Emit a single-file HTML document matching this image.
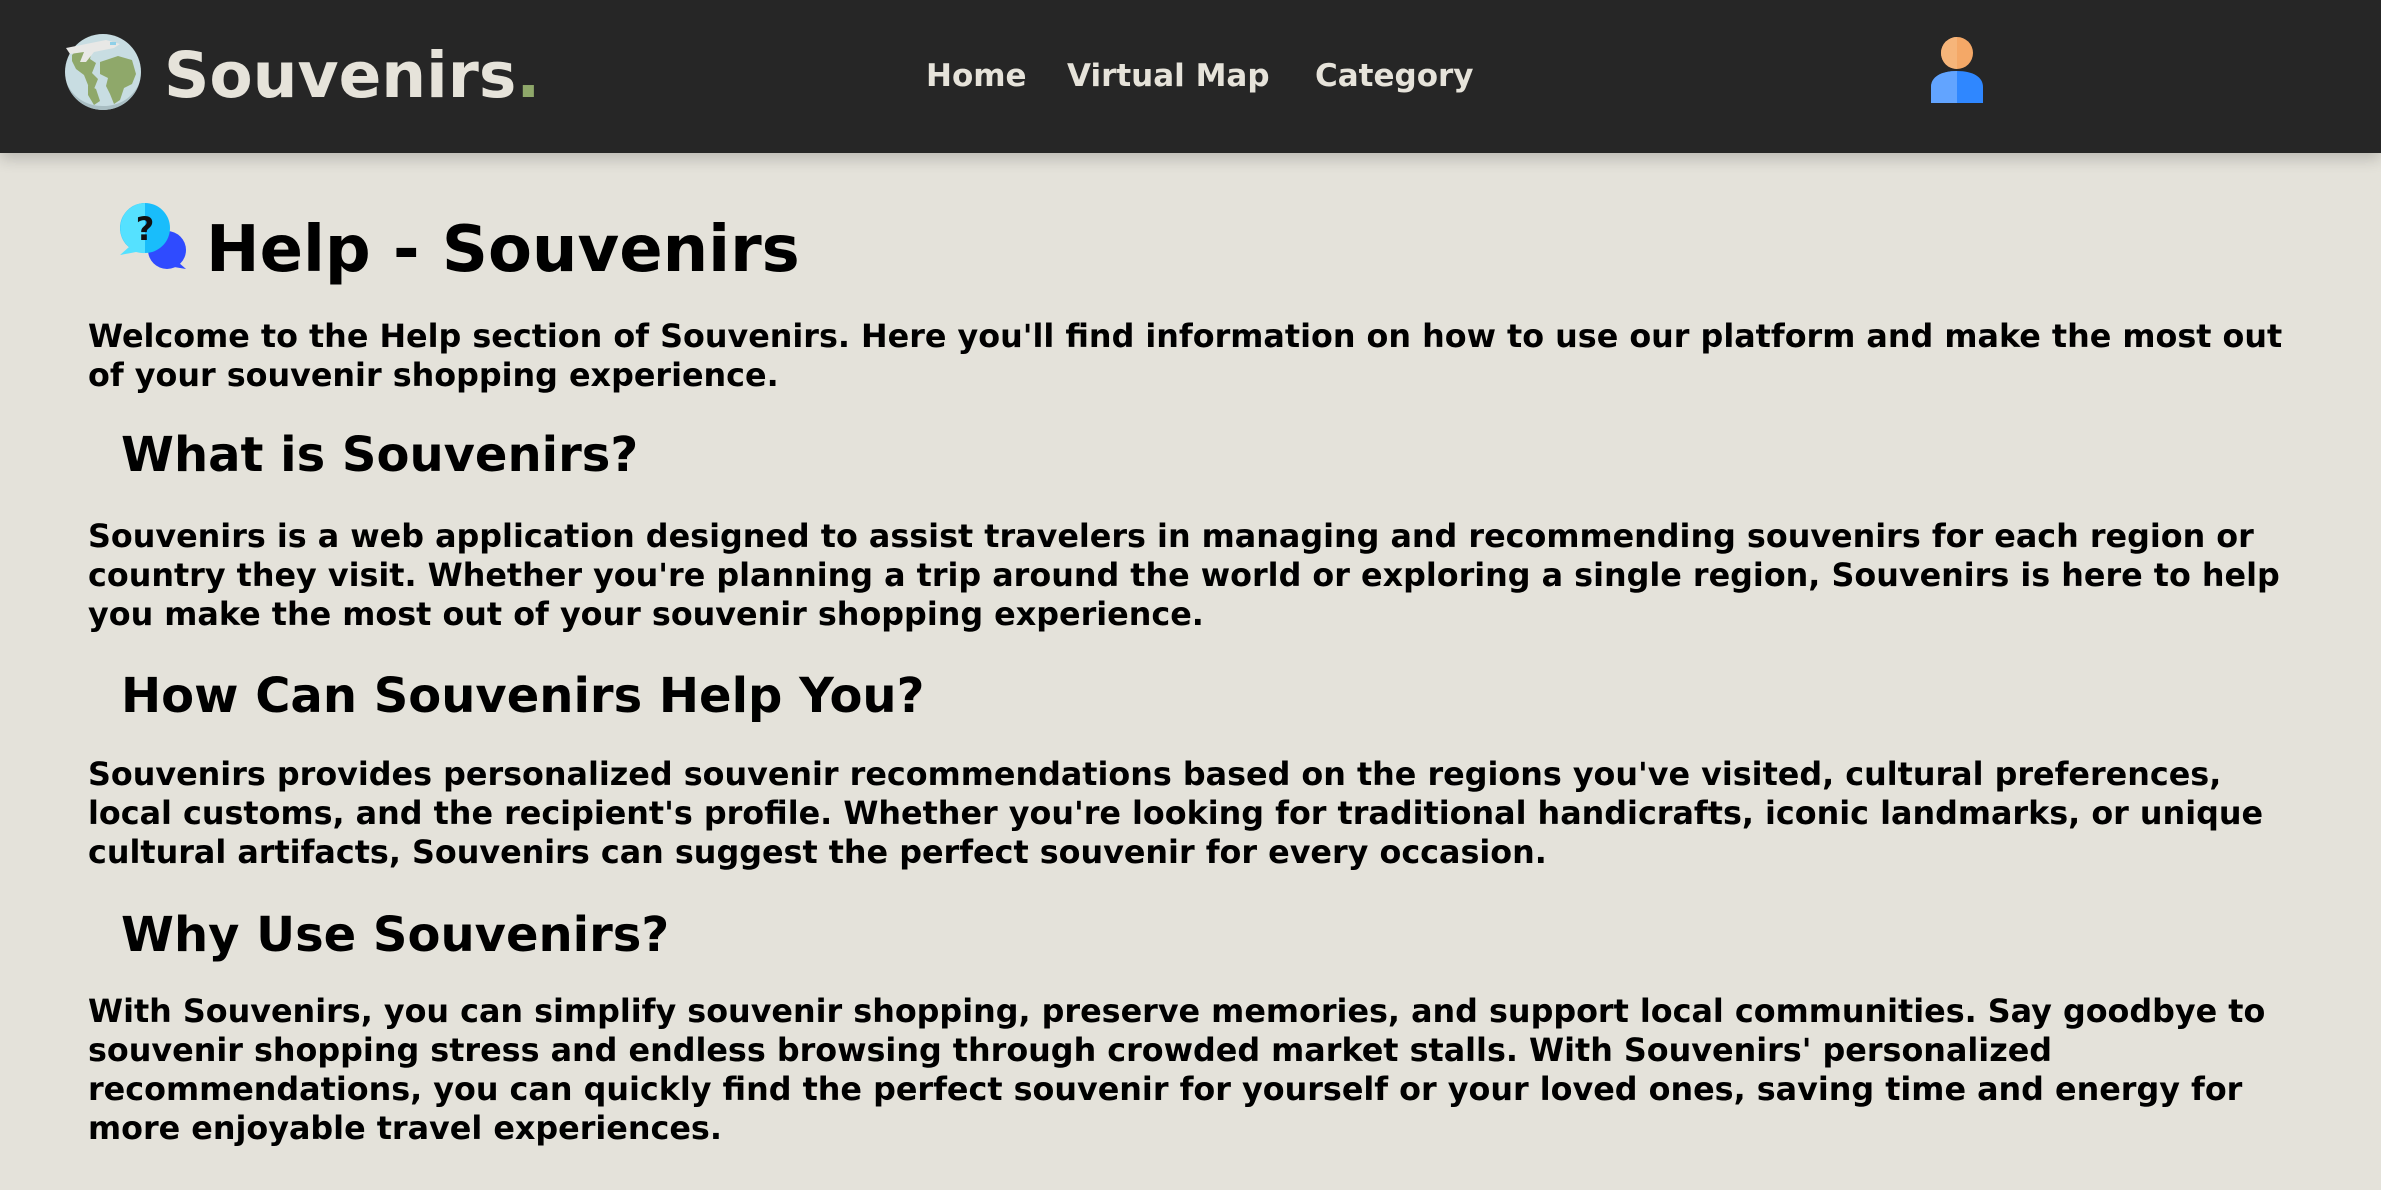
<!DOCTYPE html>
<html><head><meta charset="utf-8"><style>
*{margin:0;padding:0;box-sizing:border-box}
html,body{width:2381px;height:1190px;overflow:hidden;background:#e4e2da;font-family:"DejaVu Sans","Liberation Sans",sans-serif;font-weight:bold;color:#000}
.hdr{position:absolute;left:0;top:0;width:2381px;height:153px;background:#262626;box-shadow:0 6px 14px rgba(0,0,0,0.18)}
.abs{position:absolute;white-space:nowrap}
.logo{left:164px;top:39px;font-size:63px;line-height:74px;color:#e6e3da}
.logo span{color:#8fa86a}
.nav{top:58px;font-size:31px;line-height:36px;color:#e6e3da}
.h1{left:206px;top:213px;font-size:64px;line-height:75px}
.h2{left:121px;font-size:48px;line-height:56px}
.p{left:88px;font-size:31.8px;line-height:39px}
</style></head><body>
<div class="hdr"></div>
<svg class="abs" style="left:60px;top:30px" width="90" height="86" viewBox="60 30 90 86">
<circle cx="103" cy="72" r="38" fill="#c8dde2"/>
<path d="M103 110a38 38 0 0 1-36-26c8 16 22 22 36 22s28-6 36-22a38 38 0 0 1-36 26z" fill="#a9bec3"/>
<path d="M72 55c6-6 14-8 20-4l-2 8 6 4-4 10 6 6-4 10-6-4-4-10-8-6-4-8z" fill="#8fa86a"/>
<path d="M100 62l18-6 14 4 4 14-4 10-8 4-4 12-6 4-4-10-4-8 2-8-8-4z" fill="#8fa86a"/>
<path d="M88 85l8 4 4 12-6 4-6-10z" fill="#8fa86a"/>
<path d="M66 48l40-8 14 4-6 4-20 4-8 10-6 0 4-10-14 2-4-6z" fill="#e8e8e6"/>
<rect x="110" y="42" width="6" height="3" fill="#8fd0e8"/>
</svg>
<div class="abs logo">Souvenirs<span>.</span></div>
<div class="abs nav" style="left:926px">Home</div>
<div class="abs nav" style="left:1067px">Virtual Map</div>
<div class="abs nav" style="left:1315px">Category</div>
<svg class="abs" style="left:1925px;top:35px" width="64" height="72" viewBox="0 0 64 72">
<circle cx="32" cy="18" r="16" fill="#f4a867"/>
<path d="M32 2a16 16 0 0 0 0 32z" fill="#f6b57a"/>
<path d="M6 68V52c0-10 10-16 26-16s26 6 26 16v16z" fill="#2f87ff"/>
<path d="M6 68V52c0-10 10-16 26-16v32z" fill="#62a4ff"/>
</svg>
<svg class="abs" style="left:115px;top:200px" width="75" height="75" viewBox="115 200 75 75">
<circle cx="167" cy="250" r="19" fill="#2f4bff"/>
<path d="M178 262l8 7-12-2z" fill="#2f4bff"/>
<circle cx="145" cy="228" r="25" fill="#19bdfb"/>
<path d="M145 203a25 25 0 0 0-16 44l-9 8 16-3a25 25 0 0 0 9 1z" fill="#55e1ff"/>
<text x="145" y="240" font-size="32" font-family="DejaVu Sans" font-weight="bold" text-anchor="middle" fill="#111">?</text>
</svg>
<div class="abs h1">Help - Souvenirs</div>
<div class="abs p" style="top:317px">Welcome to the Help section of Souvenirs. Here you'll find information on how to use our platform and make the most out<br>of your souvenir shopping experience.</div>
<div class="abs h2" style="top:427px">What is Souvenirs?</div>
<div class="abs p" style="top:517px">Souvenirs is a web application designed to assist travelers in managing and recommending souvenirs for each region or<br>country they visit. Whether you're planning a trip around the world or exploring a single region, Souvenirs is here to help<br>you make the most out of your souvenir shopping experience.</div>
<div class="abs h2" style="top:668px">How Can Souvenirs Help You?</div>
<div class="abs p" style="top:755px">Souvenirs provides personalized souvenir recommendations based on the regions you've visited, cultural preferences,<br>local customs, and the recipient's profile. Whether you're looking for traditional handicrafts, iconic landmarks, or unique<br>cultural artifacts, Souvenirs can suggest the perfect souvenir for every occasion.</div>
<div class="abs h2" style="top:907px">Why Use Souvenirs?</div>
<div class="abs p" style="top:992px">With Souvenirs, you can simplify souvenir shopping, preserve memories, and support local communities. Say goodbye to<br>souvenir shopping stress and endless browsing through crowded market stalls. With Souvenirs' personalized<br>recommendations, you can quickly find the perfect souvenir for yourself or your loved ones, saving time and energy for<br>more enjoyable travel experiences.</div>
</body></html>
